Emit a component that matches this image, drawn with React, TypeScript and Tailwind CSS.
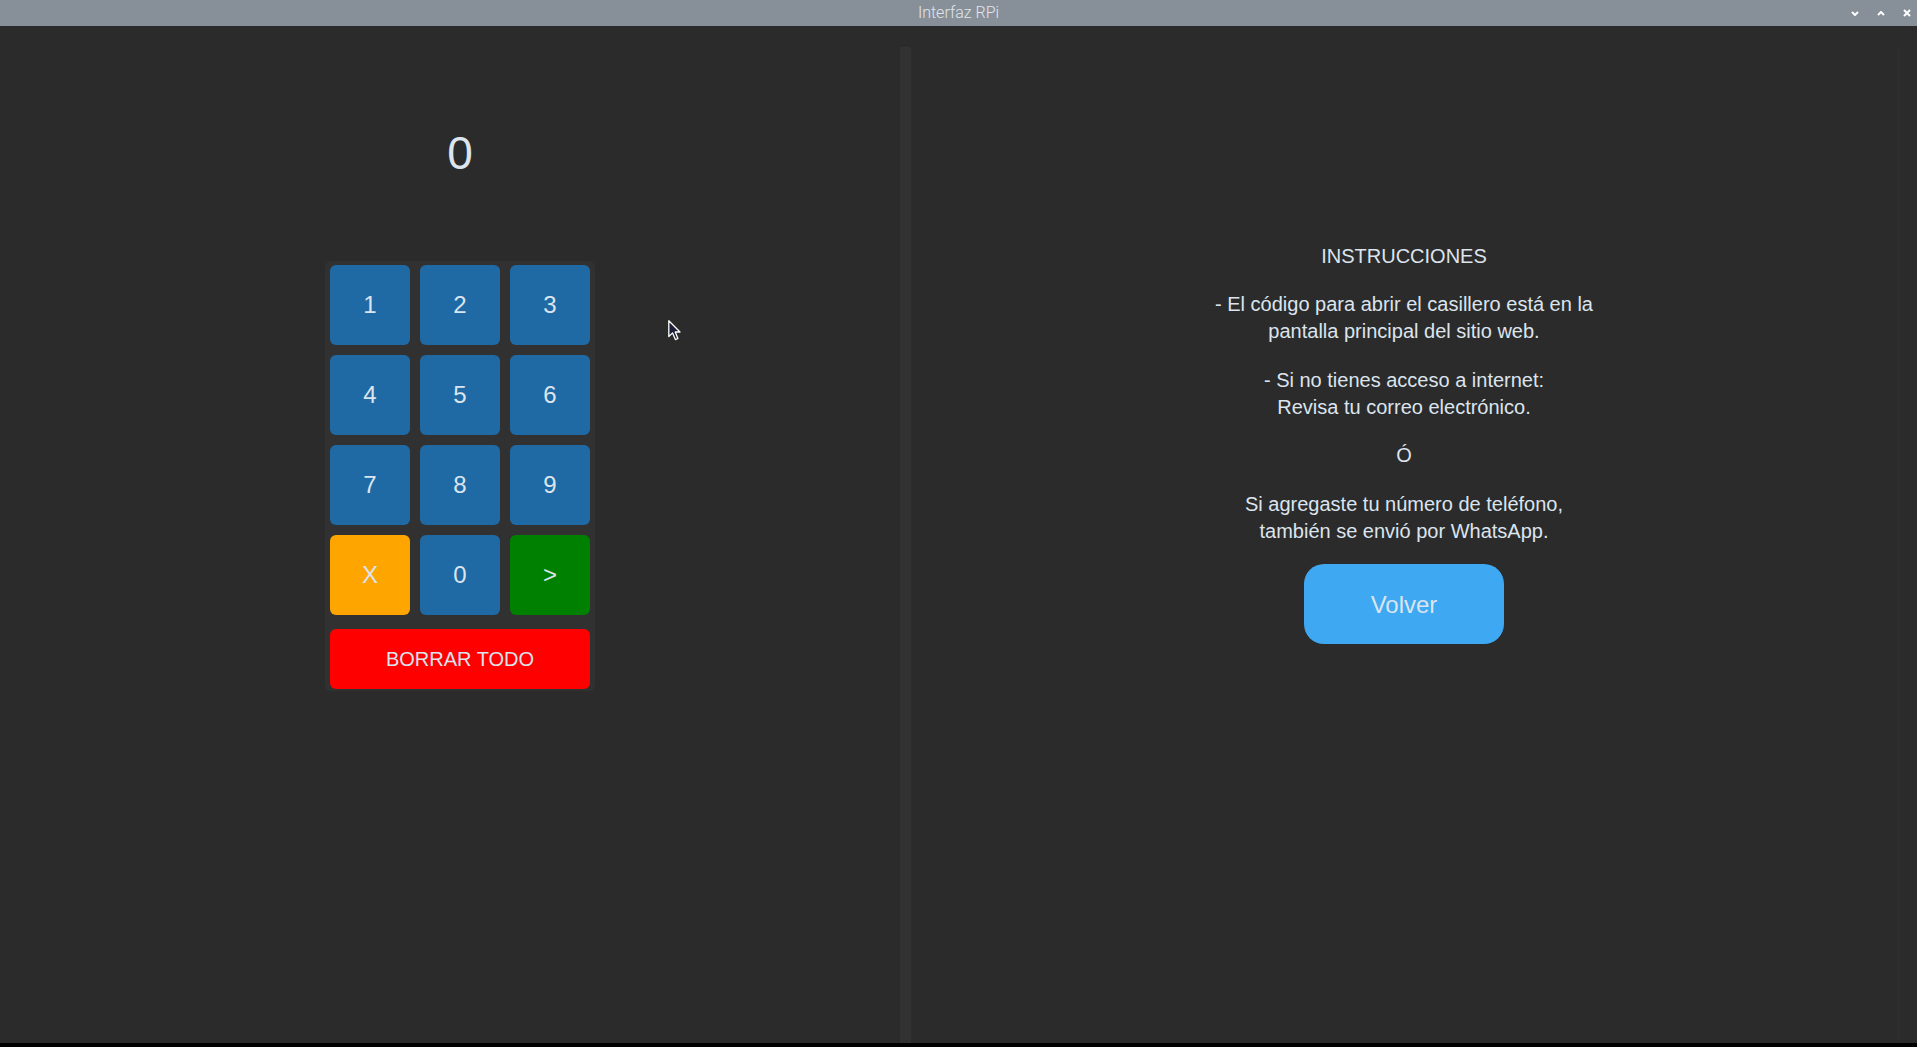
const keys: { label: string; color: string }[] = [
  { label: '1', color: 'bg-[#1f6aa5]' },
  { label: '2', color: 'bg-[#1f6aa5]' },
  { label: '3', color: 'bg-[#1f6aa5]' },
  { label: '4', color: 'bg-[#1f6aa5]' },
  { label: '5', color: 'bg-[#1f6aa5]' },
  { label: '6', color: 'bg-[#1f6aa5]' },
  { label: '7', color: 'bg-[#1f6aa5]' },
  { label: '8', color: 'bg-[#1f6aa5]' },
  { label: '9', color: 'bg-[#1f6aa5]' },
  { label: 'X', color: 'bg-[#ffa500]' },
  { label: '0', color: 'bg-[#1f6aa5]' },
  { label: '>', color: 'bg-[#008000]' },
]

function TitleBar() {
  return (
    <div className="relative h-[26px] shrink-0 bg-[#878f99] flex items-center justify-center">
      <span className="text-[16px] font-light text-[#e2e6ea] font-['Roboto',sans-serif] leading-none">
        Interfaz RPi
      </span>
      {/* controles de ventana */}
      <div className="absolute right-0 top-0 h-[26px] flex items-center">
        <svg width="8" height="5" viewBox="0 0 8 5" className="mr-[18px]">
          <path d="M1 1 L4 4 L7 1" fill="none" stroke="#ffffff" strokeWidth="2" />
        </svg>
        <svg width="8" height="5" viewBox="0 0 8 5" className="mr-[18px]">
          <path d="M1 4 L4 1 L7 4" fill="none" stroke="#ffffff" strokeWidth="2" />
        </svg>
        <svg width="8" height="8" viewBox="0 0 8 8" className="mr-[6px]">
          <path d="M1 1 L7 7 M7 1 L1 7" fill="none" stroke="#ffffff" strokeWidth="2" />
        </svg>
      </div>
    </div>
  )
}

function Keypad() {
  return (
    <div className="mt-[85px] w-[270px] rounded-[6px] bg-[#313131] pt-[4px] px-[5px] pb-[2px]">
      <div className="grid grid-cols-[80px_80px_80px] gap-[10px]">
        {keys.map((k) => (
          <div
            key={k.label}
            className={`${k.color} h-[80px] rounded-[6px] flex items-center justify-center text-[24px] text-[#dce4ee]`}
          >
            {k.label}
          </div>
        ))}
      </div>
      <div className="mt-[14px] h-[60px] rounded-[6px] bg-[#ff0000] flex items-center justify-center text-[20px] text-[#dce4ee]">
        BORRAR TODO
      </div>
    </div>
  )
}

function Instructions() {
  return (
    <div className="flex-1 flex flex-col items-center pt-[217px] text-[20px] leading-[27px] text-[#dce4ee] text-center">
      <p>INSTRUCCIONES</p>
      <p className="mt-[21px]">
        - El código para abrir el casillero está en la
        <br />
        pantalla principal del sitio web.
      </p>
      <p className="mt-[22px]">
        - Si no tienes acceso a internet:
        <br />
        Revisa tu correo electrónico.
      </p>
      <p className="mt-[21px]">Ó</p>
      <p className="mt-[22px]">
        Si agregaste tu número de teléfono,
        <br />
        también se envió por WhatsApp.
      </p>
      <div className="mt-[19px] w-[200px] h-[80px] rounded-[20px] bg-[#3ea8f2] flex items-center justify-center text-[24px] text-[#dce4ee]">
        Volver
      </div>
    </div>
  )
}

export default function App() {
  return (
    <div className="relative w-[1917px] h-[1047px] flex flex-col bg-black overflow-hidden font-['Liberation_Sans',Arial,sans-serif]">
      <TitleBar />

      <div className="h-[1017px] shrink-0 flex bg-[#2b2b2b]">
        {/* Panel izquierdo: teclado */}
        <div className="w-[900px] pl-[20px] flex flex-col items-center">
          <div className="mt-[104px] text-[46px] leading-[46px] text-[#dce4ee]">0</div>
          <Keypad />
        </div>

        {/* separador */}
        <div className="w-[11px] mt-[19px] rounded-t-[3px] bg-[#323232] border-t border-[#262626]" />

        {/* Panel derecho */}
        <div className="flex-1 flex">
          <Instructions />
          <div className="w-[3px] mt-[20px] bg-[#2d2d2d]" />
          <div className="w-[17px]" />
        </div>
      </div>

      <div className="h-[4px] shrink-0 bg-black" />

      {/* puntero del ratón */}
      <svg
        width="13"
        height="21"
        viewBox="0 0 13 21"
        className="absolute left-[668px] top-[320px]"
      >
        <path
          d="M0.8 0.8 L0.8 16.5 L4.6 12.9 L7.4 19.6 L9.9 18.5 L7.2 12 L12 12 Z"
          fill="#1b2038"
          stroke="#ffffff"
          strokeWidth="1.3"
          strokeLinejoin="round"
        />
      </svg>
    </div>
  )
}
